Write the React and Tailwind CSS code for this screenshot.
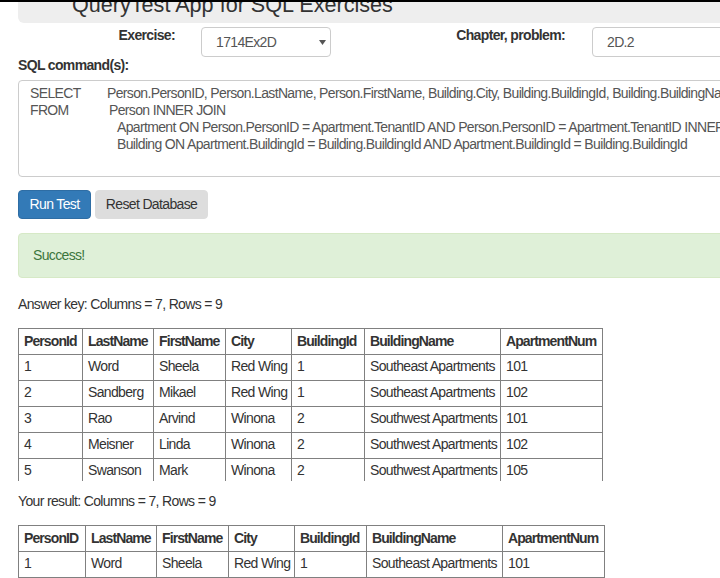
import React from 'react';

// Column sets for the two result grids (widths measured from the screenshot)
const answerCols = [
  { name: 'PersonId', w: 'w-[64px]' },
  { name: 'LastName', w: 'w-[71px]' },
  { name: 'FirstName', w: 'w-[72px]' },
  { name: 'City', w: 'w-[66px]' },
  { name: 'BuildingId', w: 'w-[73px]' },
  { name: 'BuildingName', w: 'w-[136px]' },
  { name: 'ApartmentNum', w: 'w-[102px]' },
];

const resultCols = [
  { name: 'PersonID', w: 'w-[67px]' },
  { name: 'LastName', w: 'w-[71px]' },
  { name: 'FirstName', w: 'w-[72px]' },
  { name: 'City', w: 'w-[66px]' },
  { name: 'BuildingId', w: 'w-[72px]' },
  { name: 'BuildingName', w: 'w-[136px]' },
  { name: 'ApartmentNum', w: 'w-[102px]' },
];

// only the rows that fit in view
const rows = [
  ['1', 'Word', 'Sheela', 'Red Wing', '1', 'Southeast Apartments', '101'],
  ['2', 'Sandberg', 'Mikael', 'Red Wing', '1', 'Southeast Apartments', '102'],
  ['3', 'Rao', 'Arvind', 'Winona', '2', 'Southwest Apartments', '101'],
  ['4', 'Meisner', 'Linda', 'Winona', '2', 'Southwest Apartments', '102'],
  ['5', 'Swanson', 'Mark', 'Winona', '2', 'Southwest Apartments', '105'],
];

const ResultTable = ({ cols, data, width }) => (
  <table className={`table-fixed border-collapse ${width}`}>
    <colgroup>
      {cols.map(c => (
        <col key={c.name} className={c.w} />
      ))}
    </colgroup>
    <thead>
      <tr>
        {cols.map(c => (
          <th
            key={c.name}
            className="border border-[#808080] px-[5px] py-[5px] text-left font-bold leading-[15px] tracking-[-0.9px] whitespace-nowrap"
          >
            {c.name}
          </th>
        ))}
      </tr>
    </thead>
    <tbody>
      {data.map(r => (
        <tr key={r[0]}>
          {r.map((cell, i) => (
            <td
              key={i}
              className="border border-[#808080] px-[5px] pt-[4px] pb-[6px] leading-[15px] whitespace-nowrap"
            >
              {cell}
            </td>
          ))}
        </tr>
      ))}
    </tbody>
  </table>
);

export default function App() {
  return (
    <div className="w-[720px] h-[578px] overflow-hidden bg-white text-[#333] font-['Liberation_Sans',Arial,sans-serif] text-[14px] tracking-[-0.65px]">
      <div className="h-[2px] bg-black" />

      {/* Page header (scrolled partly out of view) */}
      <div className="ml-[18px] w-[740px] h-[21px] overflow-hidden rounded-bl-[6px] bg-[#eee] pl-[54px]">
        <h1 className="mt-[-8px] text-[21.6px] leading-none tracking-normal whitespace-nowrap">
          QueryTest App for SQL Exercises
        </h1>
      </div>

      {/* Exercise / chapter selectors */}
      <div className="mt-[4px] flex h-[30px]">
        <div className="mt-[-2px] w-[175px] shrink-0 text-right font-bold leading-[20px]">Exercise:</div>
        <div className="ml-[26px] flex h-[30px] w-[130px] shrink-0 items-center justify-between rounded-[4px] border border-[#ccc] pl-[14px] pr-[4px] text-[#555]">
          <span>1714Ex2D</span>
          <svg width="7" height="5" viewBox="0 0 7 5">
            <path d="M0 0h7L3.5 5z" fill="#555" />
          </svg>
        </div>
        <div className="mt-[-2px] w-[234px] shrink-0 text-right font-bold leading-[20px]">Chapter, problem:</div>
        <div className="ml-[27px] flex h-[30px] w-[200px] shrink-0 items-center rounded-[4px] border border-[#ccc] pl-[14px] text-[#555]">
          2D.2
        </div>
      </div>

      <div className="ml-[18px] mt-[-2px] font-bold leading-[20px]">SQL command(s):</div>

      {/* SQL text box */}
      <div className="ml-[18px] mt-[5px] h-[97px] w-[740px] overflow-hidden whitespace-nowrap rounded-[4px] border border-[#ccc] pl-[11px] pt-[4px] leading-[17px] text-[#555]">
        <div className="flex">
          <span className="w-[77px] shrink-0">SELECT</span>
          <span>Person.PersonID, Person.LastName, Person.FirstName, Building.City, Building.BuildingId, Building.BuildingName, Apartment.ApartmentNum</span>
        </div>
        <div className="flex">
          <span className="w-[79px] shrink-0">FROM</span>
          <span>Person INNER JOIN</span>
        </div>
        <div className="pl-[87px]">
          Apartment ON Person.PersonID = Apartment.TenantID AND Person.PersonID = Apartment.TenantID INNER JOIN
        </div>
        <div className="pl-[87px]">
          Building ON Apartment.BuildingId = Building.BuildingId AND Apartment.BuildingId = Building.BuildingId
        </div>
      </div>

      <div className="ml-[18px] mt-[13px] flex gap-[4px]">
        <button className="h-[29px] w-[73px] rounded-[4px] border border-[#2e6da4] bg-[#337ab7] text-white">
          Run Test
        </button>
        <button className="h-[29px] w-[113px] rounded-[4px] border border-[#ddd] bg-[#ddd] text-[#333]">
          Reset Database
        </button>
      </div>

      <div className="ml-[18px] mt-[14px] flex h-[45px] w-[740px] items-center rounded-[4px] border border-[#d6e9c6] bg-[#dff0d8] pl-[14px] text-[#3c763d]">
        Success!
      </div>

      <div className="ml-[18px] mt-[16px] leading-[20px]">Answer key: Columns = 7, Rows = 9</div>
      <div className="ml-[18px] mt-[14px] h-[153px] overflow-hidden">
        <ResultTable cols={answerCols} data={rows} width="w-[584px]" />
      </div>

      <div className="ml-[18px] mt-[10px] leading-[20px]">Your result: Columns = 7, Rows = 9</div>
      <div className="ml-[18px] mt-[14px]">
        <ResultTable cols={resultCols} data={rows.slice(0, 1)} width="w-[586px]" />
      </div>
    </div>
  );
}
